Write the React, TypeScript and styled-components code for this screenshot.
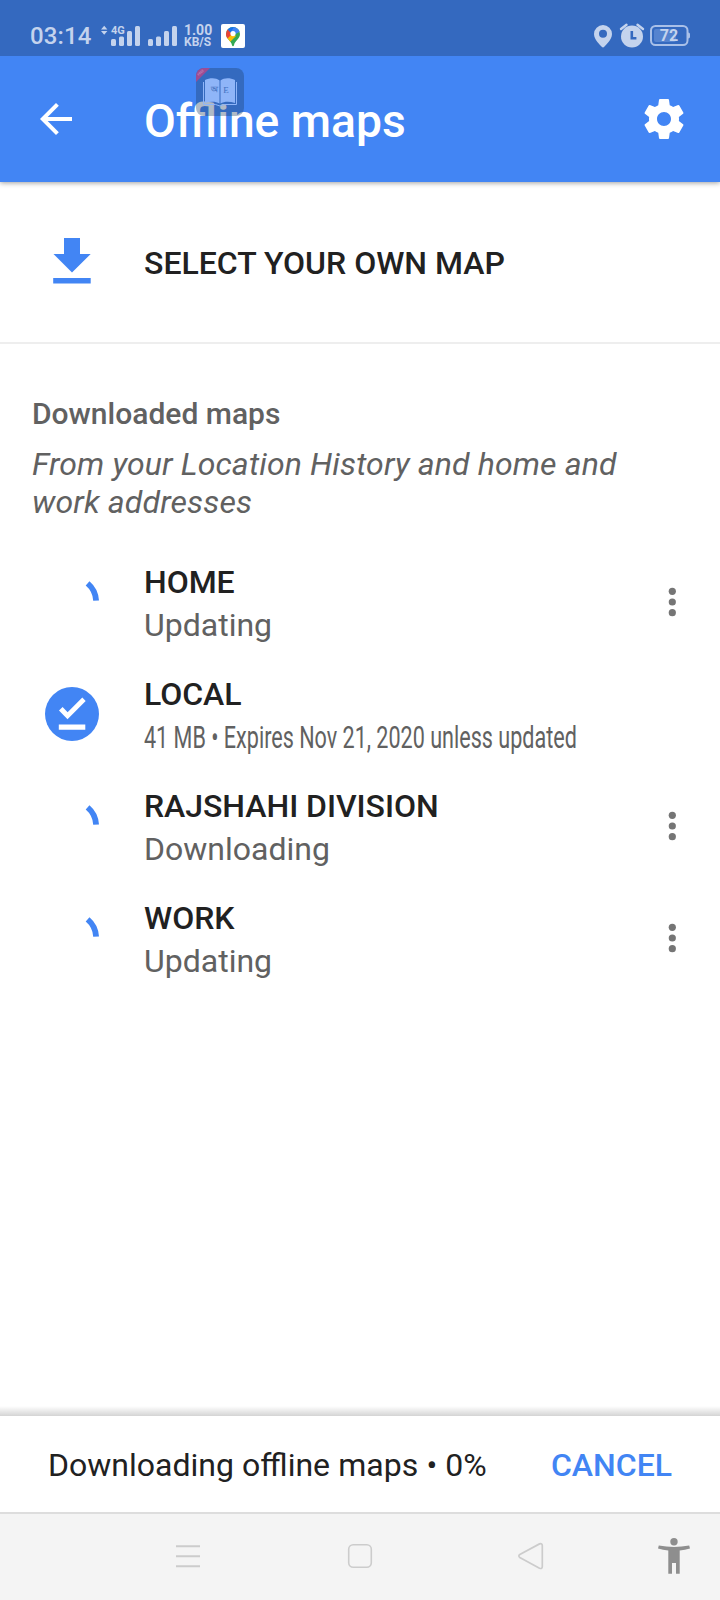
import React from "react";
import styled, { createGlobalStyle } from "styled-components";

const BLUE = "#4285f4";
const STATUS = "#c4d3ed";

const Global = createGlobalStyle`
  * { box-sizing: border-box; }
  body { margin: 0; background: #fff; font-family: Roboto, "Noto Sans", sans-serif; }
  svg { display: block; flex: none; }
  button { border: 0; padding: 0; background: none; font: inherit; color: inherit; }
`;

const Screen = styled.main`
  width: 720px;
  height: 1600px;
  display: flex;
  flex-direction: column;
  background: #fff;
  overflow: hidden;
`;

const StatusBar = styled.div`
  position: relative;
  z-index: 2;
  height: 56px;
  flex: none;
  background: #3469bf;
  color: ${STATUS};
  display: flex;
  align-items: flex-start;
  padding: 22px 30px 0;
`;

const Clock = styled.span`
  width: 71px;
  font-size: 24px;
  font-weight: 500;
  line-height: 29px;
  letter-spacing: 0.1px;
  white-space: nowrap;
`;

const Signal = styled.div`
  position: relative;
  width: 83px;
  height: 28px;
`;

const NetworkTag = styled.span`
  position: absolute;
  left: 10px;
  top: 2px;
  font-size: 11px;
  font-weight: 700;
  line-height: 13px;
`;

const Speed = styled.div`
  width: 37px;
  font-weight: 700;
  white-space: nowrap;
`;

const SpeedValue = styled.div`
  font-size: 14px;
  line-height: 13px;
  padding-top: 2px;
`;

const SpeedUnit = styled.div`
  font-size: 12px;
  line-height: 11px;
`;

const MapsTile = styled.div`
  width: 24px;
  height: 24px;
  margin-top: 2px;
  border-radius: 2px;
  background: #fff;
`;

const StatusRight = styled.div`
  margin-left: auto;
  display: flex;
`;

const AppBar = styled.header`
  position: relative;
  z-index: 1;
  height: 126px;
  flex: none;
  background: ${BLUE};
  color: #fff;
  display: flex;
  align-items: center;
  padding: 0 32px;
  box-shadow: 0 1px 5px rgba(0, 0, 0, 0.38);
`;

const Title = styled.h1`
  flex: 1;
  margin: 4px 0 0 64px;
  font-size: 46.2px;
  font-weight: 500;
  line-height: 54px;
`;

const FloatingApp = styled.div`
  position: absolute;
  left: 196px;
  top: 12px;
  width: 48px;
  height: 48px;
  border-radius: 8px;
  overflow: hidden;
  background: rgba(26, 56, 92, 0.35);
`;

const SelectRow = styled.button`
  height: 162px;
  flex: none;
  display: flex;
  align-items: center;
  padding: 0 0 2px 48px;
  border-bottom: 2px solid #eee;
  text-align: left;
`;

const SelectLabel = styled.span`
  margin-left: 48px;
  padding-top: 4px;
  font-size: 32px;
  font-weight: 500;
  line-height: 38px;
  color: #212121;
`;

const Content = styled.section`
  flex: 1;
  padding-top: 52px;
`;

const SectionTitle = styled.h2`
  margin: 0;
  padding-left: 32px;
  font-size: 30px;
  font-weight: 500;
  line-height: 36px;
  color: #616161;
`;

const SectionNote = styled.p`
  margin: 13px 0 25px;
  padding: 0 80px 0 32px;
  font-size: 32px;
  font-style: italic;
  line-height: 38px;
  letter-spacing: 0.14px;
  color: #616161;
`;

const MapRow = styled.div`
  height: 112px;
  display: flex;
  align-items: center;
  padding-left: 44px;
`;

const MapText = styled.div`
  flex: 1;
  margin-left: 44px;
  padding-top: 4px;
  white-space: nowrap;
`;

const MapName = styled.div`
  font-size: 32px;
  font-weight: 500;
  line-height: 42px;
  letter-spacing: -0.04px;
  color: #212121;
`;

const MapDetail = styled.div<{ $squeeze?: number }>`
  font-size: 32px;
  line-height: 44px;
  color: #616161;
  transform: scaleX(${(p) => p.$squeeze ?? 1});
  transform-origin: 0 50%;
`;

const MoreButton = styled.button`
  width: 96px;
  height: 96px;
  display: flex;
  align-items: center;
  justify-content: center;
`;

const DownloadSheet = styled.div`
  height: 96px;
  flex: none;
  position: relative;
  background: #fff;
  display: flex;
  align-items: center;
  justify-content: space-between;
  padding: 2px 48px 0;
  font-size: 32px;
  line-height: 38px;
  color: #212121;
  &::before {
    content: "";
    position: absolute;
    left: 0;
    right: 0;
    top: -10px;
    height: 10px;
    background: linear-gradient(rgba(0, 0, 0, 0), rgba(0, 0, 0, 0.17));
  }
`;

const SheetText = styled.span`
  word-spacing: 0.25px;
`;

const CancelButton = styled.button`
  font-weight: 500;
  color: ${BLUE};
`;

const NavBar = styled.nav`
  height: 88px;
  flex: none;
  border-top: 2px solid #ddd;
  background: #f4f4f4;
  display: flex;
  align-items: center;
  padding: 0 26px 2px 168px;
`;

const NavButton = styled.button<{ $gap: number }>`
  margin-right: ${(p) => p.$gap}px;
`;

const SignalIcon = () => (
  <svg width="83" height="28" viewBox="101 22 83 28" fill={STATUS}>
    <path d="M101 29.500l3.200-3.800 3.200 3.800zM101 31l3.200 3.800 3.200-3.800z" />
    <rect x="111" y="39" width="5" height="7" rx="1.500" />
    <rect x="119" y="36.500" width="5" height="9.500" rx="1.500" />
    <rect x="127" y="31" width="5" height="15" rx="1.500" />
    <rect x="135" y="26" width="5" height="20" rx="1.500" />
    <rect x="148" y="39" width="5" height="7" rx="1.500" />
    <rect x="156" y="36.500" width="5" height="9.500" rx="1.500" />
    <rect x="164" y="31" width="5" height="15" rx="1.500" />
    <rect x="172" y="26" width="5" height="20" rx="1.500" />
  </svg>
);

const MapsPin = () => (
  <svg width="24" height="24" viewBox="0 0 24 24">
    <defs>
      <clipPath id="pin">
        <path d="M12 3a7 7 0 0 0-7 7c0 5 5.200 6.500 6 11.200.3 1.500 1.700 1.500 2 0C13.800 16.500 19 15 19 10a7 7 0 0 0-7-7z" />
      </clipPath>
    </defs>
    <g clipPath="url(#pin)">
      <path fill="#34a853" d="M0 0h24v24H0z" />
      <path fill="#fbbc04" d="M4 14l8-5 3 3-7 7z" />
      <path fill="#ea4335" d="M4 4l4 1.500 3.500 4L6 15l-3-1z" />
      <path fill="#1a73e8" d="M6.500 5.500L10 1l5 1-5 7z" />
      <path fill="#4285f4" d="M14 1l6 6-7 4-3-3z" />
    </g>
    <circle cx="12" cy="9.600" r="2.600" fill="#fff" />
  </svg>
);

const StatusIcons = () => (
  <svg width="100" height="28" viewBox="590 22 100 28" fill={STATUS}>
    <path
      fillRule="evenodd"
      d="M603 25a9 9 0 0 0-9 9c0 6 6.500 11.200 7.700 12.700.8.900 1.800.9 2.600 0C605.500 45.200 612 40 612 34a9 9 0 0 0-9-9zm0 4.800a4 4 0 1 1 0 8 4 4 0 0 1 0-8z"
    />
    <circle cx="632" cy="36.500" r="11" />
    <path d="M631.800 31v7.300h4.600" fill="none" stroke="#3469bf" strokeWidth="2.600" />
    <path
      d="M621 29l5.500-4.300M643 29l-5.500-4.300"
      fill="none"
      stroke={STATUS}
      strokeWidth="2.400"
      strokeLinecap="round"
    />
    <rect x="651" y="26" width="36.500" height="19" rx="4.500" fill="none" stroke="#a9c0e8" strokeWidth="2" />
    <rect x="654" y="29" width="22" height="13" rx="2" fill="#5583cf" />
    <path d="M688 32.500c2 0 2 1 2 3s0 3-2 3z" fill="#a9c0e8" />
    <text x="669" y="41.200" textAnchor="middle" fontFamily="Roboto" fontWeight="700" fontSize="16">
      72
    </text>
  </svg>
);

const BackIcon = () => (
  <svg width="48" height="48" viewBox="0 0 24 24" fill="#fff">
    <path d="M20 11H7.830l5.590-5.590L12 4l-8 8 8 8 1.410-1.410L7.830 13H20v-2z" />
  </svg>
);

const GearIcon = () => (
  <svg width="48" height="48" viewBox="0 0 24 24" fill="#fff">
    <path d="M19.430 12.980c.04-.32.07-.64.07-.98s-.03-.66-.07-.98l2.110-1.650c.19-.15.24-.42.12-.64l-2-3.460c-.12-.22-.39-.3-.61-.22l-2.490 1c-.52-.4-1.080-.73-1.690-.98l-.38-2.650C14.460 2.180 14.250 2 14 2h-4c-.25 0-.46.18-.49.42l-.38 2.650c-.61.25-1.170.59-1.690.98l-2.490-1c-.23-.09-.49 0-.61.22l-2 3.460c-.13.22-.07.49.12.64l2.110 1.650c-.04.32-.07.65-.07.98s.03.66.07.98l-2.110 1.650c-.19.15-.24.42-.12.64l2 3.460c.12.22.39.3.61.22l2.490-1c.52.4 1.080.73 1.690.98l.38 2.650c.03.24.24.42.49.42h4c.25 0 .46-.18.49-.42l.38-2.650c.61-.25 1.170-.59 1.690-.98l2.490 1c.23.09.49 0 .61-.22l2-3.460c.12-.22.07-.49-.12-.64l-2.110-1.650zM12 15.500c-1.930 0-3.500-1.570-3.500-3.500s1.570-3.500 3.500-3.500 3.500 1.570 3.500 3.500-1.570 3.500-3.500 3.500z" />
  </svg>
);

const BookIcon = () => (
  <svg width="48" height="48" viewBox="0 0 48 48">
    <path d="M0 0h14L0 14z" fill="#9c4c94" />
    <text x="0" y="7.700" textAnchor="middle" transform="rotate(-45)" fontFamily="Roboto" fontWeight="700" fontSize="3.200" fill="#c689b9">
      FREE
    </text>
    <path d="M7.500 14v22.500h12l4.500 1.500 4.500-1.500h12V14" fill="none" stroke="#8fb5f8" strokeWidth="1" />
    <path
      d="M9 12c5-2.500 11-2.500 14.500.5v23c-4-2.300-9-2.300-14.500-.5zM39 12c-5-2.500-11-2.500-14.500.5v23c4-2.300 9-2.300 14.500-.5z"
      fill="#8fb5f8"
    />
    <text x="18" y="24" textAnchor="middle" fontFamily="Noto Sans" fontWeight="700" fontSize="8" fill="#4b78c4">
      অ
    </text>
    <text x="30" y="25" textAnchor="middle" fontFamily="Liberation Serif" fontSize="9" fill="#4070c0">
      E
    </text>
  </svg>
);

const DownloadIcon = () => (
  <svg width="48" height="48" viewBox="0 0 48 48" fill={BLUE}>
    <path d="M16 1h16v16h10.700L24 35.500 5.500 17H16zM5.200 41h37.500v5.500H5.200z" />
  </svg>
);

const Spinner = () => (
  <svg width="56" height="56" viewBox="-28 -28 56 56">
    <path d="M15.600 -18.600A24.200 24.200 0 0 1 24.100 -1.300" fill="none" stroke={BLUE} strokeWidth="5.800" />
  </svg>
);

const DoneBadge = () => (
  <svg width="56" height="56" viewBox="-28 -28 56 56">
    <circle r="27" fill={BLUE} />
    <path d="M-13-3.500l3.600-3.500 5 5.200 14.700-14.700 3.400 3.500L-4.500 5.300zM-13.200 10.500h26.500v5.300h-26.500z" fill="#fff" />
  </svg>
);

const MoreIcon = () => (
  <svg width="8" height="30" viewBox="-4 -15 8 30" fill="#757575">
    <circle cx=".3" cy="-10.700" r="3.600" />
    <circle cx=".3" r="3.600" />
    <circle cx=".3" cy="10.700" r="3.600" />
  </svg>
);

const RecentsIcon = () => (
  <svg width="40" height="40" viewBox="168 1536 40 40">
    <path d="M176 1546.300h24M176 1556.300h24M176 1566.300h24" stroke="#ccc" strokeWidth="2" />
  </svg>
);

const HomeIcon = () => (
  <svg width="40" height="40" viewBox="340 1536 40 40">
    <rect x="348.700" y="1544.700" width="22.600" height="22.600" rx="4.500" fill="none" stroke="#ccc" strokeWidth="1.600" />
  </svg>
);

const NavBackIcon = () => (
  <svg width="40" height="40" viewBox="510 1536 40 40">
    <path
      d="M519.800 1554.500L539.500 1543.900Q542.300 1543 542.300 1545.800V1566.500Q542.300 1569.300 539.500 1568.200L519.800 1557.500Q517.900 1556 519.800 1554.500z"
      fill="none"
      stroke="#ccc"
      strokeWidth="1.700"
    />
  </svg>
);

const AccessibilityIcon = () => (
  <svg width="40" height="40" viewBox="654 1536 40 40" fill="#8e8e8e">
    <circle cx="674" cy="1541.700" r="3.700" />
    <path d="M658.800 1545.500q15.200 2.800 30.400 0l.8 3.100q-5 1.400-10.300 2V1573.700h-3.700V1563h-4v10.700h-3.700V1550.600q-5.300-.6-10.300-2z" />
  </svg>
);

interface OfflineMap {
  name: string;
  detail: string;
  done?: boolean;
  squeeze?: number;
}

const maps: OfflineMap[] = [
  { name: "HOME", detail: "Updating" },
  { name: "LOCAL", detail: "41 MB • Expires Nov 21, 2020 unless updated", done: true, squeeze: 0.674 },
  { name: "RAJSHAHI DIVISION", detail: "Downloading" },
  { name: "WORK", detail: "Updating" },
];

export default function App() {
  return (
    <Screen>
      <Global />
      <StatusBar>
        <Clock>03:14</Clock>
        <Signal>
          <SignalIcon />
          <NetworkTag>4G</NetworkTag>
        </Signal>
        <Speed>
          <SpeedValue>1.00</SpeedValue>
          <SpeedUnit>KB/S</SpeedUnit>
        </Speed>
        <MapsTile>
          <MapsPin />
        </MapsTile>
        <StatusRight>
          <StatusIcons />
        </StatusRight>
      </StatusBar>
      <AppBar>
        <BackIcon />
        <Title>Offline maps</Title>
        <GearIcon />
        <FloatingApp>
          <BookIcon />
        </FloatingApp>
      </AppBar>
      <SelectRow>
        <DownloadIcon />
        <SelectLabel>SELECT YOUR OWN MAP</SelectLabel>
      </SelectRow>
      <Content>
        <SectionTitle>Downloaded maps</SectionTitle>
        <SectionNote>From your Location History and home and work addresses</SectionNote>
        {maps.map((m) => (
          <MapRow key={m.name}>
            {m.done ? <DoneBadge /> : <Spinner />}
            <MapText>
              <MapName>{m.name}</MapName>
              <MapDetail $squeeze={m.squeeze}>{m.detail}</MapDetail>
            </MapText>
            <MoreButton>
              <MoreIcon />
            </MoreButton>
          </MapRow>
        ))}
      </Content>
      <DownloadSheet>
        <SheetText>Downloading offline maps • 0%</SheetText>
        <CancelButton>CANCEL</CancelButton>
      </DownloadSheet>
      <NavBar>
        <NavButton $gap={132}>
          <RecentsIcon />
        </NavButton>
        <NavButton $gap={130}>
          <HomeIcon />
        </NavButton>
        <NavButton $gap={104}>
          <NavBackIcon />
        </NavButton>
        <NavButton $gap={0}>
          <AccessibilityIcon />
        </NavButton>
      </NavBar>
    </Screen>
  );
}
